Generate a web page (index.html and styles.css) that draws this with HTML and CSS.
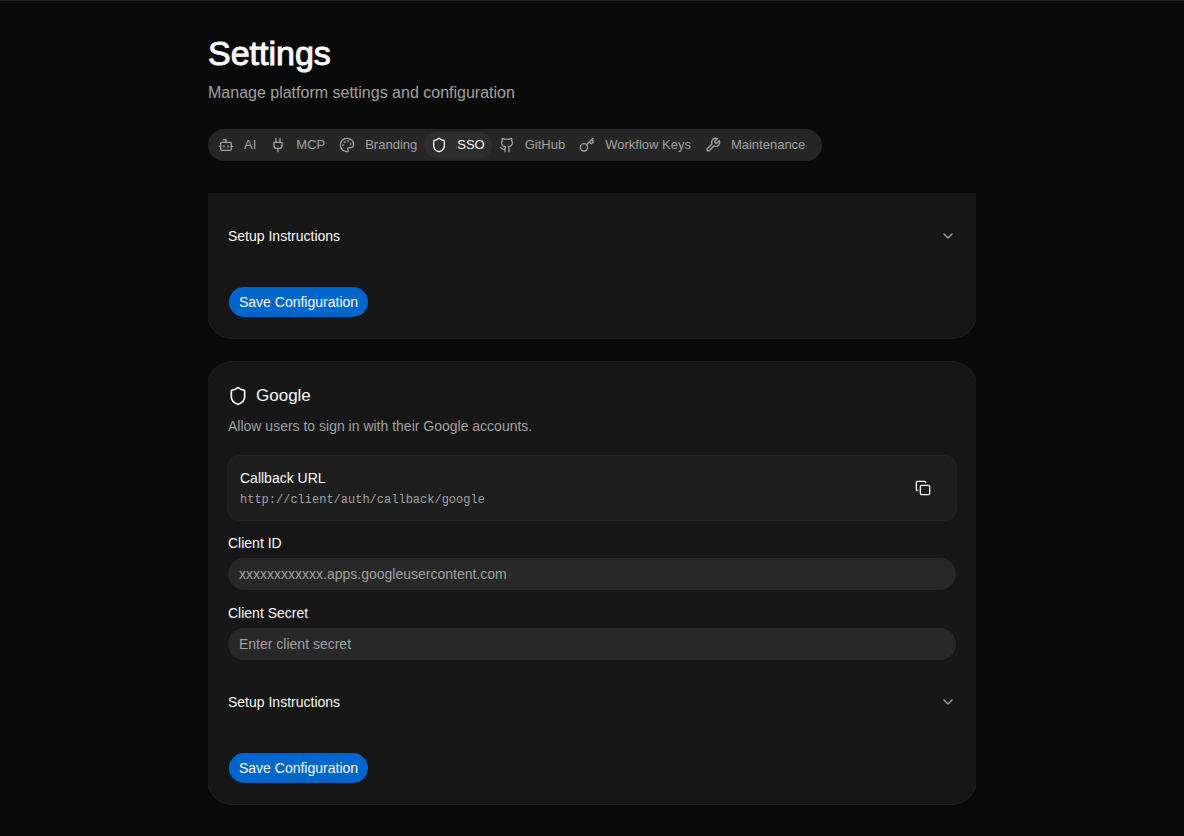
FILE: index.html
```html
<!DOCTYPE html>
<html lang="en">
<head>
<meta charset="utf-8">
<meta name="viewport" content="width=device-width, initial-scale=1">
<title>Settings</title>
<link rel="stylesheet" href="styles.css">
</head>
<body>
<main class="page">
  <header class="page-header">
    <h1 class="page-title">Settings</h1>
    <p class="page-subtitle">Manage platform settings and configuration</p>
  </header>

  <nav class="tabs" aria-label="Settings sections">
    <button type="button" class="tab"><svg class="icon" viewBox="0 0 24 24"><path d="M12 8V4H8"/><rect width="16" height="12" x="4" y="8" rx="2"/><path d="M2 14h2M20 14h2M15 13v2M9 13v2"/></svg>AI</button>
    <button type="button" class="tab"><svg class="icon" viewBox="0 0 24 24"><path d="M12 22v-5M9 8V2M15 8V2M18 8v5a4 4 0 0 1-4 4h-4a4 4 0 0 1-4-4V8Z"/></svg>MCP</button>
    <button type="button" class="tab"><svg class="icon" viewBox="0 0 24 24"><path d="M12 22a1 1 0 0 1 0-20 10 9 0 0 1 10 9 5 5 0 0 1-5 5h-2.25a1.75 1.75 0 0 0-1.4 2.8l.3.4a1.75 1.75 0 0 1-1.4 2.8z"/><circle cx="13.5" cy="6.5" r=".5"/><circle cx="17.5" cy="10.5" r=".5"/><circle cx="6.5" cy="12.5" r=".5"/><circle cx="8.5" cy="7.5" r=".5"/></svg>Branding</button>
    <button type="button" class="tab tab-active" aria-current="page"><svg class="icon" viewBox="0 0 24 24"><path d="M20 13c0 5-3.500 7.500-7.660 8.950a1 1 0 0 1-.67-.01C7.500 20.500 4 18 4 13V6a1 1 0 0 1 1-1c2 0 4.500-1.200 6.240-2.720a1.170 1.170 0 0 1 1.520 0C14.510 3.810 17 5 19 5a1 1 0 0 1 1 1z"/></svg>SSO</button>
    <button type="button" class="tab"><svg class="icon" viewBox="0 0 24 24"><path d="M15 22v-4a4.800 4.800 0 0 0-1-3.500c3 0 6-2 6-5.500.08-1.250-.27-2.480-1-3.500.28-1.150.28-2.350 0-3.500 0 0-1 0-3 1.500-2.640-.5-5.360-.5-8 0C6 2 5 2 5 2c-.3 1.150-.3 2.350 0 3.500A5.403 5.403 0 0 0 4 9c0 3.500 3 5.500 6 5.500-.39.49-.68 1.050-.85 1.650-.17.6-.22 1.230-.15 1.850v4"/><path d="M9 18c-4.510 2-5-2-7-2"/></svg>GitHub</button>
    <button type="button" class="tab"><svg class="icon" viewBox="0 0 24 24"><path d="m15.500 7.500 2.300 2.300a1 1 0 0 0 1.400 0l2.100-2.100a1 1 0 0 0 0-1.400L19 4"/><path d="m21 2-9.600 9.600"/><circle cx="7.500" cy="15.500" r="5.500"/></svg>Workflow Keys</button>
    <button type="button" class="tab"><svg class="icon" viewBox="0 0 24 24"><path d="M14.700 6.300a1 1 0 0 0 0 1.400l1.600 1.600a1 1 0 0 0 1.400 0l3.770-3.770a6 6 0 0 1-7.940 7.940l-6.910 6.910a2.120 2.120 0 0 1-3-3l6.910-6.910a6 6 0 0 1 7.940-7.940l-3.760 3.760z"/></svg>Maintenance</button>
  </nav>

  <div class="panels">
    <section class="card card-scrolled">
      <button type="button" class="disclosure" aria-expanded="false">Setup Instructions<svg class="icon icon-muted" viewBox="0 0 24 24"><path d="m6 9 6 6 6-6"/></svg></button>
      <button type="button" class="save">Save Configuration</button>
    </section>

    <section class="card">
      <h2 class="card-title"><svg class="icon icon-large" viewBox="0 0 24 24"><path d="M20 13c0 5-3.500 7.500-7.660 8.950a1 1 0 0 1-.67-.01C7.500 20.500 4 18 4 13V6a1 1 0 0 1 1-1c2 0 4.500-1.200 6.240-2.720a1.170 1.170 0 0 1 1.520 0C14.510 3.810 17 5 19 5a1 1 0 0 1 1 1z"/></svg>Google</h2>
      <p class="card-description">Allow users to sign in with their Google accounts.</p>
      <div class="callback">
        <div class="callback-text">
          <span>Callback URL</span>
          <code class="callback-url">http://client/auth/callback/google</code>
        </div>
        <button type="button" class="copy" aria-label="Copy callback URL"><svg class="icon" viewBox="0 0 24 24"><rect width="14" height="14" x="8" y="8" rx="2"/><path d="M4 16c-1.100 0-2-.9-2-2V4c0-1.100.9-2 2-2h10c1.100 0 2 .9 2 2"/></svg></button>
      </div>
      <div class="field">
        <label for="client-id">Client ID</label>
        <input id="client-id" type="text" placeholder="xxxxxxxxxxxx.apps.googleusercontent.com">
      </div>
      <div class="field">
        <label for="client-secret">Client Secret</label>
        <input id="client-secret" type="password" placeholder="Enter client secret">
      </div>
      <button type="button" class="disclosure disclosure-spaced" aria-expanded="false">Setup Instructions<svg class="icon icon-muted" viewBox="0 0 24 24"><path d="m6 9 6 6 6-6"/></svg></button>
      <button type="button" class="save">Save Configuration</button>
    </section>
  </div>
</main>
</body>
</html>
```
FILE: styles.css
```css
* { box-sizing: border-box; }

body {
  margin: 0;
  background: #0a0a0a;
  color: #fafafa;
  font: 14px/20px "Liberation Sans", Arial, sans-serif;
  border-top: 1px solid #232323;
}

button, input { font: inherit; color: inherit; }
button { border: 0; background: none; cursor: pointer; }
h1, h2, p { margin: 0; font-weight: 400; }

.page { max-width: 816px; margin: 0 auto; padding: 32px 24px; }

.page-title { font-size: 34px; line-height: 40px; -webkit-text-stroke: 1px; }
.page-subtitle { margin-top: 8px; font-size: 16px; line-height: 24px; color: #a1a1a1; }

.icon {
  flex: none;
  width: 16px;
  height: 16px;
  fill: none;
  stroke: currentColor;
  stroke-width: 2;
  stroke-linecap: round;
  stroke-linejoin: round;
}
.icon-large { width: 20px; height: 20px; }
.icon-muted { color: #a1a1a1; }

.tabs {
  display: flex;
  width: fit-content;
  max-width: 100%;
  margin-top: 24px;
  padding: 3px 10px 3px 3px;
  border-radius: 16px;
  background: #262626;
}
.tab {
  display: flex;
  align-items: center;
  gap: 10px;
  height: 26px;
  padding: 0 7px;
  border-radius: 13px;
  color: #a1a1a1;
  font-size: 13px;
  white-space: nowrap;
}
.tab-active { background: #2e2e2e; color: #fafafa; }

.panels {
  display: flex;
  flex-direction: column;
  gap: 24px;
  margin-top: 32px;
  padding-bottom: 1px;
  overflow: hidden;
}

.card {
  display: flex;
  flex-direction: column;
  padding: 20px;
  border-radius: 24px;
  background: #171717;
  box-shadow: 0 0 0 1px #1e1e1e;
}
.card-scrolled { padding-top: 17px; border-radius: 0 0 24px 24px; }

.card-title { display: flex; align-items: center; gap: 8px; font-size: 17px; line-height: 28px; }
.card-description { margin-top: 6px; color: #a1a1a1; }

.callback {
  display: flex;
  align-items: center;
  justify-content: space-between;
  margin-top: 20px;
  padding: 12px;
  border-radius: 12px;
  background: #1e1e1e;
  box-shadow: 0 0 0 1px #222;
}
.callback-text { display: flex; flex-direction: column; gap: 4px; }
.callback-url { font: 12px/16px "Liberation Mono", monospace; color: #a1a1a1; }
.copy { display: flex; padding: 8px 13px; }

.field { display: flex; flex-direction: column; gap: 8px; margin-top: 16px; }
.field label { line-height: 14px; }
.field input {
  width: 100%;
  height: 32px;
  padding: 0 11px;
  border: 0;
  border-radius: 16px;
  background: #282828;
}
.field input::placeholder { color: #a1a1a1; opacity: 1; }

.disclosure {
  display: flex;
  align-items: center;
  justify-content: space-between;
  padding: 16px 0;
  text-align: left;
}
.disclosure-spaced { margin-top: 16px; }

.save {
  align-self: flex-start;
  height: 32px;
  margin-top: 24px;
  padding: 0 10px;
  border: 1px solid transparent;
  border-radius: 16px;
  background: #0066cc;
  background-clip: padding-box;
}
```
